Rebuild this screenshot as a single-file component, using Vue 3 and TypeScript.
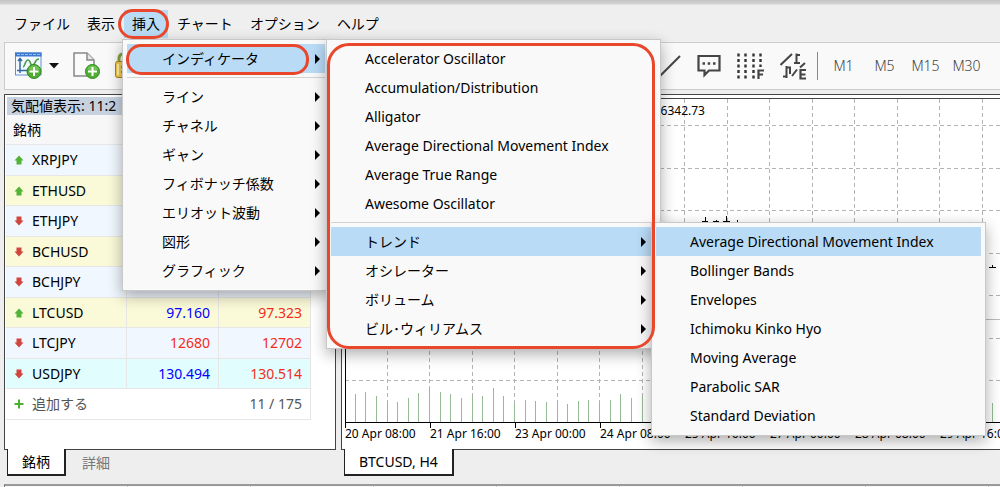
<script setup lang="ts">
type Quote = { symbol: string; up: boolean; tone: string; bid: string; ask: string; bidUp: boolean }
type MenuItem = { label: string; sub?: boolean; active?: boolean; sep?: boolean }

const menubar = ['ファイル', '表示', '挿入', 'チャート', 'オプション', 'ヘルプ']
const timeframes = ['M1', 'M5', 'M15', 'M30']

const quotes: Quote[] = [
  { symbol: 'XRPJPY', up: true, tone: 'blue', bid: '', ask: '', bidUp: true },
  { symbol: 'ETHUSD', up: true, tone: 'yellow', bid: '', ask: '', bidUp: true },
  { symbol: 'ETHJPY', up: false, tone: 'blue', bid: '', ask: '', bidUp: true },
  { symbol: 'BCHUSD', up: false, tone: 'yellow', bid: '', ask: '', bidUp: true },
  { symbol: 'BCHJPY', up: false, tone: 'blue', bid: '', ask: '', bidUp: true },
  { symbol: 'LTCUSD', up: true, tone: 'yellow', bid: '97.160', ask: '97.323', bidUp: true },
  { symbol: 'LTCJPY', up: false, tone: 'blue', bid: '12680', ask: '12702', bidUp: false },
  { symbol: 'USDJPY', up: false, tone: 'cyan', bid: '130.494', ask: '130.514', bidUp: true },
]

const insertMenu: MenuItem[] = [
  { label: 'インディケータ', sub: true, active: true },
  { label: 'ライン', sub: true, sep: true },
  { label: 'チャネル', sub: true },
  { label: 'ギャン', sub: true },
  { label: 'フィボナッチ係数', sub: true },
  { label: 'エリオット波動', sub: true },
  { label: '図形', sub: true },
  { label: 'グラフィック', sub: true },
]
const indicatorMenu: MenuItem[] = [
  { label: 'Accelerator Oscillator' },
  { label: 'Accumulation/Distribution' },
  { label: 'Alligator' },
  { label: 'Average Directional Movement Index' },
  { label: 'Average True Range' },
  { label: 'Awesome Oscillator' },
  { label: 'トレンド', sub: true, active: true, sep: true },
  { label: 'オシレーター', sub: true },
  { label: 'ボリューム', sub: true },
  { label: 'ビル･ウィリアムス', sub: true },
]
const trendMenu: MenuItem[] = [
  { label: 'Average Directional Movement Index', active: true },
  { label: 'Bollinger Bands' },
  { label: 'Envelopes' },
  { label: 'Ichimoku Kinko Hyo' },
  { label: 'Moving Average' },
  { label: 'Parabolic SAR' },
  { label: 'Standard Deviation' },
]
const menus = [
  { id: 'insert', label: '挿入', items: insertMenu },
  { id: 'indicator', label: 'インディケータ', items: indicatorMenu },
  { id: 'trend', label: 'トレンド', items: trendMenu },
]

const columns = Array.from({ length: 16 }, (_, i) => Math.round((i + 1) * 42.5) - 0.5)
const rows = Array.from({ length: 7 }, (_, i) => Math.round(26 + i * 42.5) + 0.5)
const volumes = [28, 30, 26, 20, 20, 24, 29, 33, 30, 28, 24, 27, 26, 34, 26, 19, 22, 21, 20, 22, 18, 21, 22, 20, 22, 28, 24, 26]
const bars = [...volumes.map((h, i) => ({ x: Math.round((i + 1) * 10.625), h })), { x: 648, h: 19 }]
const dates = ['20 Apr 08:00', '21 Apr 16:00', '23 Apr 00:00', '24 Apr 08:00', '25 Apr 16:00', '27 Apr 00:00', '28 Apr 08:00', '29 Apr 16:00']
</script>

<template>
  <div class="window">
    <header class="menubar">
      <button v-for="m in menubar" :key="m" type="button" :class="{ open: m === '挿入' }">{{ m }}</button>
    </header>

    <div class="toolbar">
      <button type="button" class="tool chart-tool" aria-label="新規チャート">
        <svg width="27" height="28" viewBox="0 0 27 28">
          <rect x="0.5" y="1" width="25.500" height="22" fill="#f3f9fe" stroke="#5e92cc" />
          <rect x="0" y="0.5" width="26.500" height="4" fill="#3f79cd" />
          <path d="M2 2.500H25" stroke="#8fc0ee" stroke-dasharray="3 1" />
          <path d="M5 6.500V21M2 18.500H23M3 9L5 6.500L7 9" fill="none" stroke="#31699f" stroke-width="1.500" />
          <path d="M8 15C10 15 10 8 13 8S15 15 18 13S20 7 24 7" fill="none" stroke="#4c9c4a" stroke-width="1.600" />
          <circle cx="19" cy="19.500" r="7" fill="#4fae32" stroke="#2f8b22" />
          <path d="M13.500 17A6 6 0 0 1 24.500 17Q19 20 13.500 17" fill="#8bd36d" opacity=".6" />
          <path d="M19 15V24M14.500 19.500H23.500" stroke="#fff" stroke-width="2" />
        </svg>
        <svg width="10" height="6" viewBox="0 0 10 6"><path d="M0 0H10L5 5.500Z" fill="#111" /></svg>
      </button>
      <button type="button" class="tool" aria-label="新規注文">
        <svg width="28" height="28" viewBox="0 0 28 28">
          <path d="M1 1H14L21 8V24H1Z" fill="#fafafa" stroke="#888" stroke-width="1.500" />
          <path d="M14 1V8H21" fill="#e6e6e6" stroke="#888" stroke-width="1.500" />
          <circle cx="19.500" cy="19.500" r="7" fill="#4fae32" stroke="#2f8b22" />
          <path d="M14 17A6 6 0 0 1 25 17Q19.500 20 14 17" fill="#8bd36d" opacity=".6" />
          <path d="M19.500 15V24M15 19.500H24" stroke="#fff" stroke-width="2" />
        </svg>
      </button>
      <button type="button" class="tool" aria-label="ロック">
        <svg width="24" height="28" viewBox="0 0 24 28">
          <path d="M4 11V6Q4 1.500 11 1.500T18 6V11" fill="none" stroke="#7ea63c" stroke-width="3" />
          <rect x="0.500" y="9.500" width="22" height="16" rx="2" fill="#f2c94a" stroke="#a9801e" />
          <path d="M3 12V23" stroke="#fff0a8" stroke-width="2" />
          <path d="M6 15H10M6 20H10" stroke="#b98a1e" stroke-width="2" />
        </svg>
      </button>
      <div class="right-tools">
        <button type="button" class="tool" aria-label="ライン">
          <svg width="22" height="22" viewBox="0 0 22 22"><path d="M1 21L21 1" stroke="#444" stroke-width="2" /></svg>
        </button>
        <button type="button" class="tool" aria-label="コメント">
          <svg width="24" height="24" viewBox="0 0 24 24">
            <path d="M1.500 2H22.500V16.500H12L7.500 21V16.500H1.500Z" fill="none" stroke="#444" stroke-width="2.200" />
            <path d="M5.500 9.500H8M10.700 9.500H13.200M16 9.500H18.500" stroke="#444" stroke-width="2.500" />
          </svg>
        </button>
        <button type="button" class="tool" aria-label="フィボナッチ">
          <svg width="27" height="27" viewBox="0 0 27 27">
            <path d="M1.500 0.500V26M8.500 0.500V26M16.500 0.500V26M23.500 0.500V14" stroke="#333" stroke-width="2.400" stroke-dasharray="3 2.500" />
            <path d="M21.500 26V17.500H27M21.500 21.500H26" fill="none" stroke="#444" stroke-width="2.200" />
          </svg>
        </button>
        <button type="button" class="tool" aria-label="エリオット">
          <svg width="27" height="27" viewBox="0 0 27 27">
            <path d="M0.500 12L12 1M12 23L17 16.500M20 14.500L25 10" fill="none" stroke="#444" stroke-width="2" />
            <path d="M16.500 0.500V11M16.500 2H20M14 10H17.500M20 10H17M6.500 13V25M6.500 14.500H10V21M3 23.500H7" fill="none" stroke="#444" stroke-width="2" />
            <path d="M26 17H20.500V25.500H26M20.500 21.500H25.500" fill="none" stroke="#444" stroke-width="2.200" />
          </svg>
        </button>
      </div>
      <div class="frames">
        <button v-for="t in timeframes" :key="t" type="button" class="frame">{{ t }}</button>
      </div>
    </div>

    <main class="workspace">
      <section class="watch">
        <div class="panel">
          <h1>気配値表示: 11:2</h1>
          <table>
            <colgroup><col class="c-symbol" /><col class="c-price" /><col class="c-price" /></colgroup>
            <thead>
              <tr><th scope="col">銘柄</th><th></th><th></th></tr>
            </thead>
            <tbody>
              <tr v-for="q in quotes" :key="q.symbol" :class="q.tone">
                <td>
                  <span class="symbol">
                    <svg width="10" height="10" viewBox="0 0 10 10" :class="q.up ? 'up' : 'down'">
                      <path d="M5 0.500L9.500 5.500H7.500V9.500H2.500V5.500H0.500Z" />
                    </svg>{{ q.symbol }}
                  </span>
                </td>
                <td :class="['price', q.bidUp ? 'rise' : 'fall']">{{ q.bid }}</td>
                <td class="price fall">{{ q.ask }}</td>
              </tr>
              <tr class="add">
                <td>
                  <span class="symbol">
                    <svg width="10" height="10" viewBox="0 0 10 10"><path d="M5 0.500V9.500M0.500 5H9.500" stroke="#4caf2e" stroke-width="2" /></svg>追加する
                  </span>
                </td>
                <td class="price" colspan="2">11 / 175</td>
              </tr>
            </tbody>
          </table>
        </div>
        <nav class="tabs">
          <button type="button" class="tab current">銘柄</button>
          <button type="button" class="tab">詳細</button>
        </nav>
      </section>

      <section class="chart">
        <div class="panel">
          <svg class="plot" width="100%" height="350">
            <g class="grid">
              <line v-for="x in columns" :key="x" :x1="x" :x2="x" y1="0" y2="323" />
              <line v-for="y in rows" :key="y" x1="0" x2="100%" :y1="y" :y2="y" />
            </g>
            <line x1="0" x2="100%" y1="220.5" y2="220.5" stroke="#bbb" />
            <rect v-for="b in bars" :key="b.x" :x="b.x - 1" :y="323 - b.h" width="1" :height="b.h" class="bar" />
            <path class="candles" d="M360.500 118V123M357 122.500H363M371.500 121V123M368 122.500H374M381.500 117V123M378 122.500H385M392.500 121V123M647.500 166V169M644 168.500H651" />
            <path class="axis" d="M0.500 0V329M85.500 323V329M170.500 323V329M255.500 323V329M340.500 323V329M425.500 323V329M510.500 323V329M595.500 323V329" />
            <line class="axis" x1="0" x2="100%" y1="323.5" y2="323.5" />
            <text x="360" y="16" text-anchor="end">BTCUSD,H4 26342.73</text>
            <text v-for="(d, i) in dates" :key="d" :x="i * 85" y="339">{{ d }}</text>
          </svg>
        </div>
        <nav class="tabs">
          <button type="button" class="tab current">BTCUSD, H4</button>
        </nav>
      </section>
    </main>

    <footer class="terminal"><span v-for="n in 8" :key="n"></span></footer>

    <div v-for="m in menus" :key="m.id" :class="['menu', m.id]" role="menu" :aria-label="m.label">
      <template v-for="item in m.items" :key="item.label">
        <hr v-if="item.sep" />
        <button type="button" role="menuitem" :class="{ active: item.active }">
          {{ item.label }}
          <svg v-if="item.sub" width="5" height="10" viewBox="0 0 5 10"><path d="M0 0L5 5L0 10Z" /></svg>
        </button>
      </template>
    </div>

    <span class="mark mark-menu"></span>
    <span class="mark mark-item"></span>
    <span class="mark mark-list"></span>
  </div>
</template>

<style>
body {
  margin: 0;
}
</style>

<style scoped>
.window {
  position: relative;
  display: flex;
  flex-direction: column;
  min-height: 100vh;
  box-sizing: border-box;
  overflow: hidden;
  background: #eee;
  color: #000;
  font: 14px/20px "Noto Sans", "Noto Sans CJK JP", sans-serif;
}
button {
  margin: 0;
  padding: 0;
  border: 0;
  background: none;
  color: inherit;
  font: inherit;
}
svg {
  display: block;
  flex: none;
}
.menubar {
  display: flex;
  gap: 1px;
  height: 42px;
  box-sizing: border-box;
  padding: 10px 0 4px 6px;
  background: linear-gradient(#c4c4c4, #d4d4d4 4px, #efefef 5px);
}
.menubar button {
  padding: 0 8px;
}
.menubar .open {
  background: #b9dbf6;
}
.toolbar {
  position: relative;
  display: flex;
  align-items: center;
  gap: 14px;
  height: 48px;
  box-sizing: border-box;
  margin-left: 4px;
  padding-left: 10px;
  border: 1px solid #ccc;
  border-right: 0;
  background: #f9f9f9;
}
.chart-tool {
  display: flex;
  align-items: center;
  gap: 7px;
}
.right-tools {
  display: flex;
  align-items: center;
  gap: 16px;
  margin-left: 506px;
}
.frames {
  display: flex;
  margin-left: -4px;
  padding-left: 5px;
  border-left: 1px solid #888;
  line-height: 28px;
}
.frame {
  width: 41px;
  color: #444;
  font-weight: 300;
}
.workspace {
  display: flex;
  gap: 5px;
  margin: 4px 0 0 4px;
}
.watch {
  width: 332px;
  flex: none;
}
.chart {
  flex: 1;
  min-width: 0;
}
.panel {
  height: 356px;
  box-sizing: border-box;
  border: 1px solid #444;
  background: #fff;
}
.watch .panel {
  padding: 2px 1px;
}
.chart .panel {
  padding: 3px 0 0 3px;
  border-right: 0;
}
.plot {
  border-top: 1px solid #444;
}
h1 {
  margin: 0 0 0 1px;
  padding-left: 4px;
  background: #c6d2e0;
  font: inherit;
  line-height: 18px;
}
table {
  width: 305px;
  border-collapse: separate;
  border-spacing: 0;
  table-layout: fixed;
}
.c-symbol {
  width: 121px;
}
.c-price {
  width: 92px;
}
tr {
  height: 30px;
}
tbody tr:nth-child(odd) {
  height: 31px;
}
th,
td {
  box-sizing: border-box;
  padding: 0;
  border-bottom: 1px solid #e6e6e6;
  text-align: left;
  font-weight: 400;
}
td {
  border-right: 1px solid #e6e6e6;
}
th {
  background: #f7f7f7;
}
th:first-child {
  padding-left: 7px;
}
.blue {
  background: #f0f7fe;
}
.yellow {
  background: #fafad8;
}
.cyan {
  background: #e2fdfd;
}
.symbol {
  display: flex;
  align-items: center;
  gap: 8px;
  padding-left: 8px;
}
.up {
  fill: #52b336;
}
.down {
  fill: #d0463f;
  transform: rotate(180deg);
}
td.price {
  padding-right: 8px;
  text-align: right;
}
.rise {
  color: #00f;
}
.fall {
  color: #f22c22;
}
.add {
  color: #555;
}
.add td:first-child {
  border-right: 0;
}
.tabs {
  display: flex;
  margin: -1px 0 0 3px;
}
.tab {
  position: relative;
  height: 27px;
  padding: 1px 16px 0;
  color: #777;
}
.tab.current {
  padding: 1px 14px 0;
  border: solid #222;
  border-width: 0 2px 2px 1px;
  background: #fff;
  color: #000;
}
.grid line {
  stroke: #b4b4b4;
  stroke-dasharray: 4 3;
}
.bar {
  fill: #96ba96;
}
.axis,
.candles {
  fill: none;
  stroke: #000;
}
.plot text {
  font-size: 12px;
}
.terminal {
  display: flex;
  flex: 1;
  min-height: 3px;
  margin: 8px 0 0 4px;
  box-sizing: border-box;
  border-top: 2px solid #999;
  border-left: 1px solid #777;
  background: #f7f7f7;
}
.terminal span {
  width: 123px;
  flex: none;
  box-sizing: border-box;
  border-right: 1px solid #ccc;
}
.menu {
  position: absolute;
  box-sizing: border-box;
  padding: 4px 4px 5px;
  border: 1px solid #c8c8c8;
  background: #f9f9f9;
  box-shadow: 0 5px 14px rgba(0, 0, 0, 0.32);
}
.insert {
  left: 122px;
  top: 39px;
  width: 208px;
}
.indicator {
  left: 326px;
  top: 39px;
  width: 335px;
}
.trend {
  left: 651px;
  top: 222px;
  width: 335px;
}
.menu button {
  display: flex;
  align-items: center;
  justify-content: space-between;
  width: 100%;
  height: 29px;
  padding: 1px 10px 0 34px;
  text-align: left;
}
.menu.insert button {
  padding-right: 5px;
  padding-left: 35px;
}
.menu .active {
  background: #b9dbf6;
}
.menu hr {
  height: 1px;
  margin: 4px 0;
  border: 0;
  background: #d2d2d2;
}
.mark {
  position: absolute;
  box-sizing: border-box;
  border: 3px solid #e8472b;
  pointer-events: none;
}
.mark-menu {
  left: 118px;
  top: 9px;
  width: 51px;
  height: 30px;
  border-radius: 15px;
}
.mark-item {
  left: 126px;
  top: 44px;
  width: 183px;
  height: 31px;
  border-radius: 15px;
}
.mark-list {
  left: 327px;
  top: 43px;
  width: 328px;
  height: 306px;
  border-radius: 22px;
}
</style>
